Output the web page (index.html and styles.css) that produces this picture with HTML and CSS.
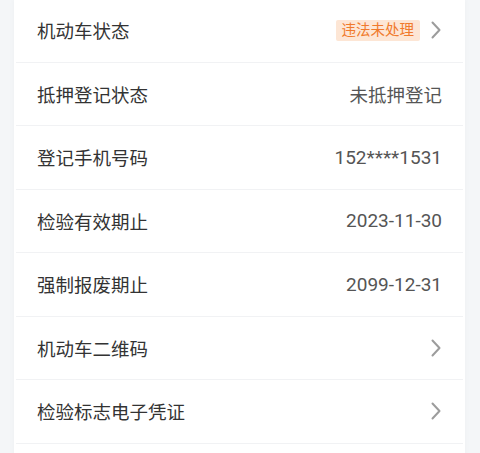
FILE: index.html
```html
<!DOCTYPE html>
<html lang="zh-CN">
<head>
    <meta charset="UTF-8">
    <title>机动车信息</title>
    <link rel="stylesheet" href="styles.css">
</head>
<body>
    <div class="page">
        <div class="card">
            <div class="row">
                <span class="label">机动车状态</span>
                <span class="value">
                    <span class="badge">违法未处理</span>
                    <svg class="arrow" viewBox="0 0 10 18"><path d="M1.5 1.5 L8.5 9 L1.5 16.5"/></svg>
                </span>
            </div>
            <div class="row">
                <span class="label">抵押登记状态</span>
                <span class="value">未抵押登记</span>
            </div>
            <div class="row">
                <span class="label">登记手机号码</span>
                <span class="value num">152****1531</span>
            </div>
            <div class="row">
                <span class="label">检验有效期止</span>
                <span class="value num">2023-11-30</span>
            </div>
            <div class="row">
                <span class="label">强制报废期止</span>
                <span class="value num">2099-12-31</span>
            </div>
            <div class="row">
                <span class="label">机动车二维码</span>
                <span class="value">
                    <svg class="arrow" viewBox="0 0 10 18"><path d="M1.5 1.5 L8.5 9 L1.5 16.5"/></svg>
                </span>
            </div>
            <div class="row">
                <span class="label">检验标志电子凭证</span>
                <span class="value">
                    <svg class="arrow" viewBox="0 0 10 18"><path d="M1.5 1.5 L8.5 9 L1.5 16.5"/></svg>
                </span>
            </div>
            <div class="row last"></div>
        </div>
    </div>
</body>
</html>
```

FILE: styles.css
```css
* {
    margin: 0;
    padding: 0;
    box-sizing: border-box;
}

html, body {
    height: 100%;
}

body {
    background: #f4f6f8;
    font-family: Roboto, "Noto Sans CJK SC", sans-serif;
    overflow: hidden;
}

.page {
    padding: 0 15px 0 14px;
}

.card {
    background: #fff;
    margin-top: -1px;
    padding: 0 2px;
    box-shadow: 0 0 6px rgba(0, 0, 0, 0.03);
}

.row {
    height: 63.5px;
    display: flex;
    align-items: center;
    justify-content: space-between;
    padding: 0 21px;
    border-bottom: 1px solid #f1f2f4;
}

.row.last {
    height: 12px;
    border-bottom: none;
}

.label {
    font-size: 18.5px;
    color: #333;
}

.value {
    display: flex;
    align-items: center;
    gap: 11px;
    font-size: 18.5px;
    color: #555;
}

.num {
    font-size: 19px;
}

/* orange status tag */
.badge {
    background: #fde6d5;
    color: #f07a2c;
    font-size: 14.5px;
    line-height: 21px;
    padding: 0 6px;
    border-radius: 2px;
}

.arrow {
    width: 10px;
    height: 18px;
    margin-right: 1px;
}

.arrow path {
    fill: none;
    stroke: #9c9c9c;
    stroke-width: 2;
    stroke-linecap: round;
    stroke-linejoin: round;
}
```
